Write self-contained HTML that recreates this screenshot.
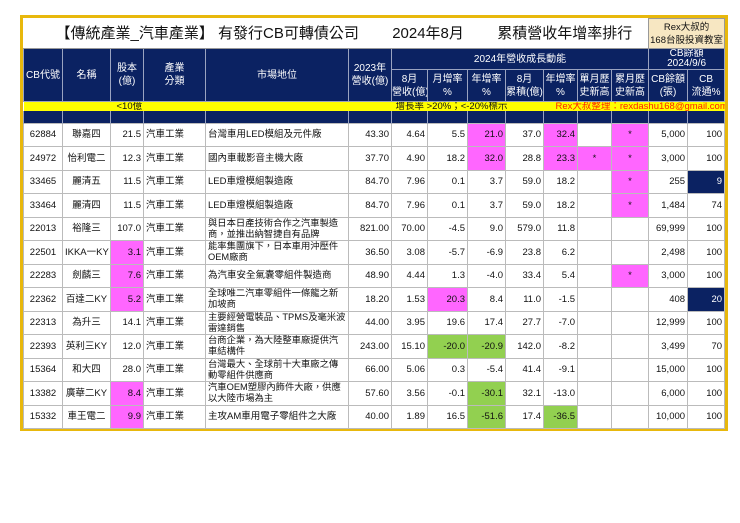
<!DOCTYPE html>
<html><head><meta charset="utf-8"><style>
body{margin:0;background:#fff;width:740px;height:523px;overflow:hidden;font-family:"Liberation Sans","Noto Sans CJK TC",sans-serif;}
.frame{position:absolute;left:20px;top:15px;width:702px;height:410px;border:3px solid #e8b80c;}
table{position:absolute;left:23px;top:18px;width:701px;border-collapse:collapse;table-layout:fixed;font-size:9.5px;color:#111;}
td{border:1px solid #bbb;padding:0 2px;overflow:hidden;white-space:nowrap;line-height:11px;box-sizing:border-box;}
.t td{border:none;}
.h td{background:#0b2262;color:#fff;text-align:center;border:1px solid #9aa3c0;font-size:10px;line-height:13px;padding:0;}
.d td{height:23.5px;text-align:right;}
.c{text-align:center!important}.l{text-align:left!important}
.w{white-space:normal!important;line-height:11px!important;font-size:9.3px}
.m{background:#ff66ff}.g{background:#92d050}.n{background:#0b2262;color:#fff}
.y td{background:#ffff00;border:none;height:9px;line-height:9px;font-size:9.5px;padding:0}
.s td{background:#0b2262;height:12px;border-top:none;border-bottom:none;border-color:#9aa3c0;padding:0}
</style></head><body>
<div class="frame"></div>
<table>
<colgroup><col style="width:39px"><col style="width:48px"><col style="width:33px"><col style="width:62px"><col style="width:143px"><col style="width:43px"><col style="width:36px"><col style="width:40px"><col style="width:38px"><col style="width:38px"><col style="width:34px"><col style="width:34px"><col style="width:37px"><col style="width:39px"><col style="width:37px"></colgroup>
<tr class="t"><td colspan="13" style="height:30px;font-size:15px;text-align:left;padding-left:32px;white-space:pre;border-bottom:1px solid #999">【傳統產業_汽車產業】 有發行CB可轉債公司        2024年8月        累積營收年增率排行</td><td colspan="2" style="background:#f7e7c2;text-align:center;font-size:9.5px;line-height:13px;border:1px solid #999;padding:0">Rex大叔的<br>168台股投資教室</td></tr>
<tr class="h"><td rowspan="2">CB代號</td><td rowspan="2">名稱</td><td rowspan="2">股本<br>(億)</td><td rowspan="2">產業<br>分類</td><td rowspan="2">市場地位</td><td rowspan="2">2023年<br>營收(億)</td><td colspan="7" style="height:20px">2024年營收成長動能</td><td colspan="2" style="line-height:10px">CB餘額<br>2024/9/6</td></tr>
<tr class="h"><td style="height:32px">8月<br>營收(億)</td><td>月增率<br>%</td><td>年增率<br>%</td><td>8月<br>累積(億)</td><td>年增率<br>%</td><td>單月歷<br>史新高</td><td>累月歷<br>史新高</td><td>CB餘額<br>(張)</td><td>CB<br>流通%</td></tr>
<tr class="y"><td></td><td></td><td colspan="3" style="padding-left:6px">&lt;10億</td><td></td><td colspan="4" style="padding-left:4px">增長率 &gt;20%；&lt;-20%標示</td><td colspan="5" style="color:#ff2000;padding-left:12px">Rex大叔整理：rexdashu168@gmail.com</td></tr>
<tr class="s"><td></td><td></td><td></td><td></td><td></td><td></td><td></td><td></td><td></td><td></td><td></td><td></td><td></td><td></td><td></td></tr>
<tr class="d"><td class="c">62884</td><td class="c">聯嘉四</td><td>21.5</td><td class="l">汽車工業</td><td class="l">台灣車用LED模組及元件廠</td><td>43.30</td><td>4.64</td><td>5.5</td><td class="m">21.0</td><td>37.0</td><td class="m">32.4</td><td></td><td class="m c">*</td><td>5,000</td><td>100</td></tr>
<tr class="d"><td class="c">24972</td><td class="c">怡利電二</td><td>12.3</td><td class="l">汽車工業</td><td class="l">國內車載影音主機大廠</td><td>37.70</td><td>4.90</td><td>18.2</td><td class="m">32.0</td><td>28.8</td><td class="m">23.3</td><td class="m c">*</td><td class="m c">*</td><td>3,000</td><td>100</td></tr>
<tr class="d"><td class="c">33465</td><td class="c">麗清五</td><td>11.5</td><td class="l">汽車工業</td><td class="l">LED車燈模組製造廠</td><td>84.70</td><td>7.96</td><td>0.1</td><td>3.7</td><td>59.0</td><td>18.2</td><td></td><td class="m c">*</td><td>255</td><td class="n">9</td></tr>
<tr class="d"><td class="c">33464</td><td class="c">麗清四</td><td>11.5</td><td class="l">汽車工業</td><td class="l">LED車燈模組製造廠</td><td>84.70</td><td>7.96</td><td>0.1</td><td>3.7</td><td>59.0</td><td>18.2</td><td></td><td class="m c">*</td><td>1,484</td><td>74</td></tr>
<tr class="d"><td class="c">22013</td><td class="c">裕隆三</td><td>107.0</td><td class="l">汽車工業</td><td class="l w">與日本日產技術合作之汽車製造商，並推出納智捷自有品牌</td><td>821.00</td><td>70.00</td><td>-4.5</td><td>9.0</td><td>579.0</td><td>11.8</td><td></td><td></td><td>69,999</td><td>100</td></tr>
<tr class="d"><td class="c">22501</td><td class="c">IKKA一KY</td><td class="m">3.1</td><td class="l">汽車工業</td><td class="l w">能率集團旗下，日本車用沖壓件OEM廠商</td><td>36.50</td><td>3.08</td><td>-5.7</td><td>-6.9</td><td>23.8</td><td>6.2</td><td></td><td></td><td>2,498</td><td>100</td></tr>
<tr class="d"><td class="c">22283</td><td class="c">劍麟三</td><td class="m">7.6</td><td class="l">汽車工業</td><td class="l">為汽車安全氣囊零組件製造商</td><td>48.90</td><td>4.44</td><td>1.3</td><td>-4.0</td><td>33.4</td><td>5.4</td><td></td><td class="m c">*</td><td>3,000</td><td>100</td></tr>
<tr class="d"><td class="c">22362</td><td class="c">百達二KY</td><td class="m">5.2</td><td class="l">汽車工業</td><td class="l w">全球唯二汽車零組件一條龍之新加坡商</td><td>18.20</td><td>1.53</td><td class="m">20.3</td><td>8.4</td><td>11.0</td><td>-1.5</td><td></td><td></td><td>408</td><td class="n">20</td></tr>
<tr class="d"><td class="c">22313</td><td class="c">為升三</td><td>14.1</td><td class="l">汽車工業</td><td class="l w">主要經營電裝品、TPMS及毫米波雷達銷售</td><td>44.00</td><td>3.95</td><td>19.6</td><td>17.4</td><td>27.7</td><td>-7.0</td><td></td><td></td><td>12,999</td><td>100</td></tr>
<tr class="d"><td class="c">22393</td><td class="c">英利三KY</td><td>12.0</td><td class="l">汽車工業</td><td class="l w">台商企業，為大陸整車廠提供汽車結構件</td><td>243.00</td><td>15.10</td><td class="g">-20.0</td><td class="g">-20.9</td><td>142.0</td><td>-8.2</td><td></td><td></td><td>3,499</td><td>70</td></tr>
<tr class="d"><td class="c">15364</td><td class="c">和大四</td><td>28.0</td><td class="l">汽車工業</td><td class="l w">台灣最大、全球前十大車廠之傳動零組件供應商</td><td>66.00</td><td>5.06</td><td>0.3</td><td>-5.4</td><td>41.4</td><td>-9.1</td><td></td><td></td><td>15,000</td><td>100</td></tr>
<tr class="d"><td class="c">13382</td><td class="c">廣華二KY</td><td class="m">8.4</td><td class="l">汽車工業</td><td class="l w">汽車OEM塑膠內飾件大廠，供應以大陸市場為主</td><td>57.60</td><td>3.56</td><td>-0.1</td><td class="g">-30.1</td><td>32.1</td><td>-13.0</td><td></td><td></td><td>6,000</td><td>100</td></tr>
<tr class="d"><td class="c">15332</td><td class="c">車王電二</td><td class="m">9.9</td><td class="l">汽車工業</td><td class="l">主攻AM車用電子零組件之大廠</td><td>40.00</td><td>1.89</td><td>16.5</td><td class="g">-51.6</td><td>17.4</td><td class="g">-36.5</td><td></td><td></td><td>10,000</td><td>100</td></tr>
</table>
</body></html>
